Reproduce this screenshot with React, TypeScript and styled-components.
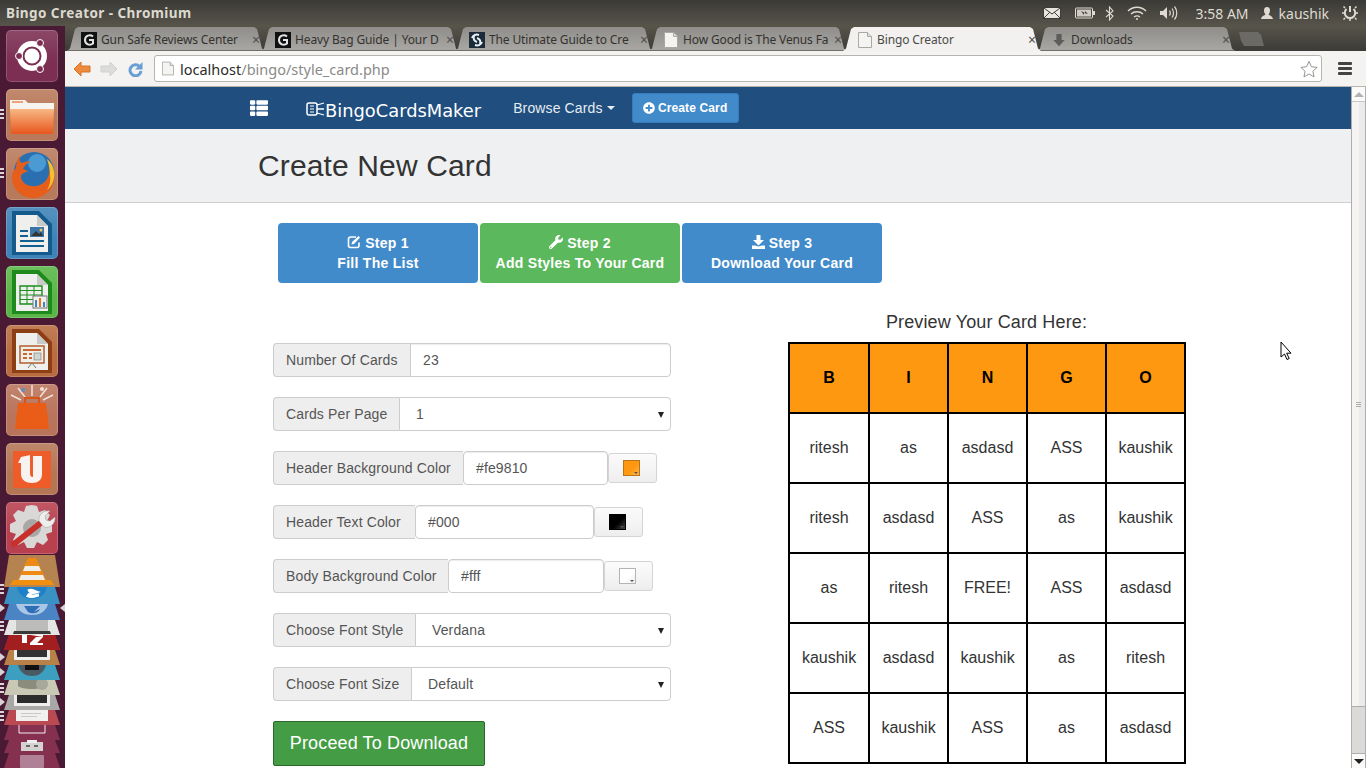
import { ReactElement, ReactNode } from "react";
import styled, { createGlobalStyle } from "styled-components";
import { FaPlusCircle, FaThList, FaWrench } from "react-icons/fa";

const GlobalStyle = createGlobalStyle`
    html, body {
        margin: 0;
        padding: 0;
        height: 768px;
        overflow: hidden;
        font-family: "Liberation Sans", Arial, sans-serif;
    }
    * { box-sizing: border-box; }
`;

const Desktop = styled.div`
    width: 1366px;
    height: 768px;
    display: flex;
    flex-direction: column;
    overflow: hidden;
`;

const TopArea = styled.div`
    background: linear-gradient(#3b3a36 0, #57544a 26px);
    height: 26px;
    display: flex;
    align-items: center;
    justify-content: space-between;
    padding: 0 8px 0 6px;
    color: #dfdbd2;
    font-family: "Noto Sans", "Open Sans", sans-serif;
`;

const WindowTitle = styled.div`
    font-size: 13.5px;
    font-weight: 700;
    letter-spacing: 0.43px;
    color: #dcd9d0;
`;

const Indicators = styled.div`
    display: flex;
    align-items: center;
    font-size: 14px;
    color: #dfdbd2;
`;

const Clock = styled.span`
    margin: 0 12px 0 17px;
`;

const UserName = styled.span`
    margin: 0 13px 0 6px;
`;

const IndicatorIcon = styled.svg<{ $gap?: number }>`
    display: block;
    margin-right: ${(p) => p.$gap ?? 0}px;
`;

const Body = styled.div`
    flex: 1;
    display: flex;
    min-height: 0;
`;

const Launcher = styled.div`
    width: 65px;
    background: #4a1a34;
    display: flex;
    flex-direction: column;
    align-items: center;
    padding-top: 4px;
    padding-right: 1px;
    position: relative;
`;

const Tile = styled.div<{ $color: string; $last?: boolean }>`
    width: 52px;
    height: 52px;
    border-radius: 5px;
    background: linear-gradient(rgba(255, 255, 255, 0.12), rgba(255, 255, 255, 0) 60%), ${(p) => p.$color};
    box-shadow: inset 0 0 0 1px rgba(255, 255, 255, 0.18);
    margin-bottom: ${(p) => (p.$last ? 1 : 7)}px;
    position: relative;
    flex: none;
    svg { display: block; }
`;

const StackSlice = styled.div<{ $color: string; $height: number }>`
    width: 56px;
    height: ${(p) => p.$height}px;
    background: ${(p) => p.$color};
    clip-path: polygon(5px 0, 51px 0, 56px 100%, 0 100%);
    flex: none;
    overflow: hidden;
    display: flex;
    justify-content: center;
    svg { display: block; }
`;

const Pips = styled.div<{ $top: number }>`
    position: absolute;
    left: 0;
    top: ${(p) => p.$top}px;
    display: flex;
    flex-direction: column;
    gap: 2px;
`;

const Pip = styled.i`
    display: block;
    width: 4px;
    height: 2px;
    background: #dcd6da;
`;

const Arrow = styled.i<{ $top: number; $right?: boolean }>`
    position: absolute;
    top: ${(p) => p.$top}px;
    ${(p) => (p.$right ? "right: 0;" : "left: 0;")}
    width: 0;
    height: 0;
    border-top: 4px solid transparent;
    border-bottom: 4px solid transparent;
    ${(p) => (p.$right ? "border-right: 5px solid #d8d2d6;" : "border-left: 5px solid #d8d2d6;")}
`;

const Browser = styled.div`
    flex: 1;
    display: flex;
    flex-direction: column;
    min-width: 0;
    background: #f2f1f0;
`;

const TabStrip = styled.div`
    height: 25px;
    background: linear-gradient(#57544a, #3c3b37);
    padding-left: 2px;
    display: flex;
    align-items: flex-end;
`;

const Tab = styled.div<{ $active?: boolean }>`
    width: 198px;
    height: 24px;
    margin-right: -4px;
    padding: 1px 4px 0 14px;
    display: flex;
    align-items: center;
    gap: 4px;
    font-family: "Noto Sans", "Open Sans", sans-serif;
    font-size: 12px;
    letter-spacing: -0.13px;
    color: ${(p) => (p.$active ? "#4a4a46" : "#34322e")};
    background: ${(p) => (p.$active ? "#f2f1f0" : "linear-gradient(#8f8d89, #a9a8a5)")};
    box-shadow: ${(p) => (p.$active ? "none" : "inset 0 -1px 0 #6f6e6a")};
    clip-path: polygon(0 100%, 3px 90%, 8px 8%, 11px 0, calc(100% - 11px) 0, calc(100% - 8px) 8%, calc(100% - 3px) 90%, 100% 100%);
    position: relative;
    z-index: ${(p) => (p.$active ? 2 : 1)};
`;

const TabIconBox = styled.span`
    width: 16px;
    height: 16px;
    flex: none;
    display: flex;
    align-items: center;
    justify-content: center;
    svg { display: block; }
`;

const TabLabel = styled.span`
    flex: 1;
    white-space: nowrap;
    overflow: hidden;
    min-width: 0;
`;

const TabClose = styled.span`
    font-size: 14px;
    width: 10px;
    text-align: center;
    color: #4f4e4a;
`;

const NewTab = styled.div`
    width: 25px;
    height: 14px;
    margin: 0 0 5px 8px;
    background: #6b6a65;
    clip-path: polygon(0 0, 19px 0, 22px 20%, 25px 100%, 5px 100%, 2px 60%);
`;

const ToolBar = styled.div`
    height: 36px;
    background: #f4f3f1;
    border-bottom: 1px solid #b5b3ae;
    display: flex;
    align-items: center;
    padding-left: 8px;
`;

const NavIcon = styled.svg<{ $gap: number }>`
    display: block;
    margin-right: ${(p) => p.$gap}px;
`;

const Omnibox = styled.div`
    width: 1168px;
    height: 27px;
    background: #fff;
    border: 1px solid #b6b4af;
    border-radius: 3px;
    display: flex;
    align-items: center;
    padding: 0 3px 0 7px;
    font-family: "Noto Sans", "Open Sans", sans-serif;
    font-size: 14.5px;
    svg { display: block; }
`;

const UrlHost = styled.span`
    color: #2c2c2c;
    margin-left: 6px;
`;

const UrlPath = styled.span`
    color: #8a8a88;
    flex: 1;
`;

const MenuBars = styled.div`
    margin-left: 16px;
    width: 14px;
    display: flex;
    flex-direction: column;
    gap: 2px;
    i {
        display: block;
        height: 3px;
        background: #45433f;
        border-radius: 1px;
    }
`;

const Viewport = styled.div`
    flex: 1;
    min-height: 0;
    display: flex;
`;

const Page = styled.div`
    flex: 1;
    min-width: 0;
    background: #fff;
    overflow: hidden;
    color: #333;
    font-size: 14px;
    letter-spacing: 0.13px;
`;

const ScrollBar = styled.div`
    width: 15px;
    display: flex;
    flex-direction: column;
    background: #dcdad8;
    border-left: 1px solid #b0aeac;
    border-right: 1px solid #b0aeac;
`;

const ScrollButton = styled.div<{ $down?: boolean }>`
    height: 15px;
    background: #fbfaf9;
    display: flex;
    align-items: center;
    justify-content: center;
    ${(p) => (p.$down ? "border-top: 1px solid #b0aeac;" : "border-bottom: 1px solid #c8c6c4;")}
    i {
        width: 0;
        height: 0;
        border-left: 5px solid transparent;
        border-right: 5px solid transparent;
        ${(p) => (p.$down ? "border-top: 5px solid #222;" : "border-bottom: 5px solid #b5b3b1;")}
    }
`;

const ScrollThumb = styled.div`
    height: 605px;
    background: linear-gradient(90deg, #f6f4f2 0 55%, #ecebe9 55% 100%);
    border-bottom: 1px solid #b0aeac;
    display: flex;
    flex-direction: column;
    align-items: center;
    justify-content: center;
    gap: 1px;
    i {
        display: block;
        width: 5px;
        height: 1px;
        background: #b0aeac;
    }
`;

const ScrollTrack = styled.div`
    flex: 1;
`;

const NavBar = styled.div`
    height: 42px;
    background: #1f4e7f;
    display: flex;
    align-items: center;
    padding-left: 185px;
    color: #fff;
`;

const Logo = styled.div`
    margin-left: 38px;
    display: flex;
    align-items: center;
    font-family: "DejaVu Sans", sans-serif;
    font-size: 17.85px;
    letter-spacing: 0;
    color: #fff;
    padding-top: 4px;
    svg { display: block; margin-top: -3px; }
`;

const BrowseLink = styled.div`
    margin-left: 32px;
    font-size: 14px;
    color: #e6ecf2;
    display: flex;
    align-items: center;
    gap: 4px;
    i {
        width: 0;
        height: 0;
        border-left: 4px solid transparent;
        border-right: 4px solid transparent;
        border-top: 4px solid #e6ecf2;
    }
`;

const CreateButton = styled.div`
    margin-left: 17px;
    width: 107px;
    height: 30px;
    background: #428bca;
    border: 1px solid #357ebd;
    border-radius: 3px;
    display: flex;
    align-items: center;
    justify-content: center;
    gap: 3px;
    font-size: 12px;
    font-weight: 700;
    color: #fff;
`;

const PageHeader = styled.div`
    height: 74px;
    background: #eff0f2;
    border-bottom: 1px solid #cfcfcf;
    display: flex;
    align-items: center;
    padding-left: 193px;
    h1 {
        margin: 0;
        font-size: 30px;
        font-weight: 400;
        color: #333;
    }
`;

const Steps = styled.div`
    margin: 20px 0 0 213px;
    display: flex;
    gap: 2px;
`;

const Step = styled.div<{ $active?: boolean }>`
    width: 200px;
    height: 60px;
    border-radius: 4px;
    background: ${(p) => (p.$active ? "#5cb85c" : "#428bca")};
    color: #fff;
    font-weight: 700;
    font-size: 14px;
    line-height: 20px;
    letter-spacing: 0.27px;
    text-align: center;
    padding-top: 10px;
    svg { vertical-align: -1px; }
`;

const Columns = styled.div`
    margin: 28px 0 0 208px;
    display: grid;
    grid-template-columns: 398px 398px;
    column-gap: 117px;
`;

const FormColumn = styled.div`
    padding-top: 32px;
    display: flex;
    flex-direction: column;
    gap: 20px;
`;

const FormRow = styled.div`
    display: flex;
    align-items: center;
`;

const AddOn = styled.label<{ $width: number }>`
    width: ${(p) => p.$width}px;
    height: 34px;
    display: flex;
    align-items: center;
    padding: 0 0 0 12px;
    flex: none;
    background: #eee;
    border: 1px solid #ccc;
    border-right: 0;
    border-radius: 4px 0 0 4px;
    color: #555;
    font-size: 14px;
    white-space: nowrap;
`;

const TextField = styled.input<{ $width?: number }>`
    height: 34px;
    ${(p) => (p.$width ? `width: ${p.$width}px;` : "flex: 1; min-width: 0;")}
    padding: 0 12px;
    border: 1px solid #ccc;
    border-radius: ${(p) => (p.$width ? "4px" : "0 4px 4px 0")};
    box-shadow: inset 0 1px 1px rgba(0, 0, 0, 0.075);
    color: #555;
    font: 14px "Liberation Sans", Arial, sans-serif;
    letter-spacing: 0.13px;
    outline: none;
`;

const SelectWrap = styled.div`
    flex: 1;
    min-width: 0;
    position: relative;
    &::after {
        content: "";
        position: absolute;
        right: 7px;
        top: 15px;
        border-left: 3.5px solid transparent;
        border-right: 3.5px solid transparent;
        border-top: 6px solid #222;
    }
`;

const SelectField = styled.select`
    display: block;
    width: 100%;
    height: 34px;
    padding: 0 16px;
    appearance: none;
    background: #fff;
    border: 1px solid #ccc;
    border-radius: 0 4px 4px 0;
    color: #555;
    font: 14px "Liberation Sans", Arial, sans-serif;
    letter-spacing: 0.13px;
    outline: none;
`;

const Swatch = styled.div`
    width: 49px;
    height: 30px;
    flex: none;
    background: linear-gradient(#fbfbfb, #eeeeee);
    border: 1px solid #d4d4d4;
    border-radius: 3px;
    display: flex;
    align-items: center;
    justify-content: center;
`;

const SwatchColor = styled.div<{ $color: string; $edge: string; $light: string }>`
    width: 17px;
    height: 16px;
    margin-right: 2px;
    background: linear-gradient(135deg, ${(p) => p.$color} 55%, ${(p) => p.$light});
    border: 1px solid ${(p) => p.$edge};
    position: relative;
    &::after {
        content: "";
        position: absolute;
        right: 1px;
        bottom: 1px;
        border-left: 2px solid transparent;
        border-right: 2px solid transparent;
        border-top: 2px solid #555;
    }
`;

const ProceedButton = styled.button`
    width: 212px;
    height: 45px;
    background: #449d44;
    border: 1px solid #2b662b;
    border-radius: 2px;
    color: #fff;
    font: 18px "Liberation Sans", Arial, sans-serif;
    letter-spacing: 0.13px;
`;

const PreviewTitle = styled.div`
    font-size: 18px;
    line-height: 20px;
    text-align: center;
    color: #333;
    padding: 1px 1px 0 0;
    margin-bottom: 10px;
`;

const CardTable = styled.table`
    width: 398px;
    border-collapse: collapse;
    table-layout: fixed;
    font-size: 16px;
    letter-spacing: 0;
    th, td {
        height: 70px;
        padding: 0;
        border: 2px solid #000;
        text-align: center;
    }
    th:first-child {
        width: 80px;
    }
    th {
        background: #fe9810;
        color: #000;
        font-weight: 700;
    }
    td {
        color: #333;
    }
`;

const CursorMark = styled.svg`
    position: absolute;
    left: 1280px;
    top: 341px;
`;

const Folder = (): ReactElement => (
    <svg width="52" height="52" viewBox="0 0 52 52">
        <path d="M4 11h15l3 3h26v8H4z" fill="#f7f3ee" />
        <path d="M6 12h11v2H6z" fill="#eda277" />
        <defs>
            <linearGradient id="fold" x1="0" y1="0" x2="0" y2="1">
                <stop offset="0" stopColor="#f7b884" />
                <stop offset="1" stopColor="#e9561f" />
            </linearGradient>
        </defs>
        <path d="M4 20h44l-1 25H5z" fill="url(#fold)" />
    </svg>
);

const Firefox = (): ReactElement => (
    <svg width="52" height="52" viewBox="0 0 52 52">
        <circle cx="28" cy="24" r="20" fill="#2a6fb0" />
        <circle cx="31" cy="15" r="9" fill="#4a9ad4" />
        <path d="M14 7c-3 5-4 9-4 13-3 3-4 6-4 9 0 12 9 21 21 21 13 0 21-10 21-20 0-7-2-14-7-19 2 5 3 10 2 15-2 9-10 13-18 12-6-1-10-5-10-9 0-3 3-5 7-5-1-2-3-2-5-3 1-3 4-6 8-7-4-1-7 0-9 1-2 0-3-4-2-8z" fill="#e65e1c" />
        <path d="M41 11c6 5 8 12 7 19-1 5-3 9-7 12 3-5 4-10 3-15 0-5-1-11-3-16z" fill="#f6c22a" />
    </svg>
);

const OfficeDoc = ({ dark, children }: { dark: string; children: ReactNode }): ReactElement => (
    <svg width="52" height="52" viewBox="0 0 52 52">
        <path d="M6 4h27l13 13v31H6z" fill={dark} />
        <path d="M10 8h21l11 11v26H10z" fill="#efefee" />
        <path d="M31 8l11 11H31z" fill="#c9c9c7" />
        {children}
    </svg>
);

const Writer = (): ReactElement => (
    <OfficeDoc dark="#145a8c">
        <path d="M14 23h8v2h-8zM14 28h8v2h-8zM14 33h24v2H14zM14 38h24v2H14z" fill="#16608f" />
        <rect x="24" y="20" width="14" height="10" fill="#3b74a6" />
        <path d="M25 29l5-5 3 3 2-2 2 4z" fill="#333" />
        <circle cx="35" cy="23" r="1.5" fill="#e8c75a" />
    </OfficeDoc>
);

const Calc = (): ReactElement => (
    <OfficeDoc dark="#1e8a1b">
        <path d="M14 20h22v18H14z" fill="none" stroke="#1c8f1c" strokeWidth="1.4" />
        <path d="M14 24.500h22M14 29h22M14 33.500h22M21 20v18M28 20v18" stroke="#1c8f1c" strokeWidth="1" />
        <rect x="27" y="30" width="14" height="12" fill="#efefee" stroke="#777" />
        <path d="M29 34h2v7h-2z" fill="#3a86c8" />
        <path d="M33 32h2v9h-2z" fill="#e8741c" />
        <path d="M37 36h2v5h-2z" fill="#3a86c8" />
    </OfficeDoc>
);

const Impress = (): ReactElement => (
    <OfficeDoc dark="#8c3f14">
        <rect x="14" y="21" width="24" height="17" fill="#efefee" stroke="#b2551f" strokeWidth="1.4" />
        <path d="M17 24h18v2H17z" fill="#c9682a" />
        <path d="M17 28h4v2h-4zM17 32h4v2h-4zM23 28h3v2h-3zM23 32h3v2h-3z" fill="#c9682a" />
        <rect x="28" y="28" width="7" height="7" fill="#cfd6cc" stroke="#777" strokeWidth="0.6" />
        <path d="M26 38l-4 5M26 38l4 5" stroke="#777" strokeWidth="1" />
    </OfficeDoc>
);

const Bag = (): ReactElement => (
    <svg width="52" height="52" viewBox="0 0 52 52">
        <path d="M12 4l7 9M26 1v11M41 4l-7 9M5 11l10 5M47 11l-10 5" stroke="#f3e2d3" strokeWidth="1.500" />
        <circle cx="17" cy="6" r="2" fill="#5b8fc4" />
        <circle cx="36" cy="5" r="2" fill="#f3e2d3" />
        <path d="M19 20v-6h14v6" fill="none" stroke="#d95516" strokeWidth="2" />
        <path d="M12 19h28l3 26H9z" fill="#ea5d18" />
    </svg>
);

const UbuntuOne = (): ReactElement => (
    <svg width="52" height="52" viewBox="0 0 52 52">
        <rect x="7" y="8" width="38" height="37" rx="1" fill="#ee5c2a" />
        <path d="M15 14l9-2v18c0 3 1 4 3 4V13h9v18c0 6-4 9-10 9s-11-3-11-9V20h-3z" fill="#f8f3f0" />
    </svg>
);

const Wrench = (): ReactElement => (
    <svg width="52" height="52" viewBox="0 0 52 52">
        <path d="M26 3l5 1 2 6 6-2 5 5-3 6 5 3v8l-6 2 2 6-5 5-6-3-3 6h-7l-3-6-6 3-5-5 3-6-6-2v-8l6-3-3-6 5-5 6 2 2-6z" fill="#d9d8d6" />
        <circle cx="26" cy="26" r="9" fill="#a8a7a5" />
        <path d="M8 42l28-22" stroke="#c8302c" strokeWidth="6" strokeLinecap="round" />
        <path d="M33 19c-1-6 4-11 11-10l-5 5 1 4 4 1 5-4c1 6-5 12-11 10z" fill="#eeeeec" stroke="#999" strokeWidth="0.5" />
    </svg>
);

const Circle = (): ReactElement => (
    <svg width="52" height="52" viewBox="0 0 52 52">
        <circle cx="26" cy="26" r="15" fill="#fff" />
        <circle cx="26" cy="26" r="8.500" fill="none" stroke="#7c2f53" strokeWidth="2" />
        <circle cx="34" cy="13" r="3.500" fill="#7c2f53" stroke="#fff" strokeWidth="1" />
        <circle cx="13" cy="26" r="3.500" fill="#7c2f53" stroke="#fff" strokeWidth="1" />
        <circle cx="34" cy="39" r="3.500" fill="#7c2f53" stroke="#fff" strokeWidth="1" />
    </svg>
);

const Cone = (): ReactElement => (
    <svg width="46" height="32" viewBox="0 0 46 32">
        <path d="M19 3h8l11 24H8z" fill="#ee8a14" />
        <path d="M16 11h14l2 5H14zM12 20h22l2 5H10z" fill="#eeeeea" />
        <path d="M4 25h38l3 5H1z" fill="#f0900e" />
    </svg>
);

const slices = [
    { color: "#3a92c4", height: 17, art: <svg width="56" height="17"><path d="M13 0h30c-2 9-9 12-15 12S15 9 13 0z" fill="#1d80c8" /><path d="M24 4c4-2 5 0 8 1-3 1-6 0-8 4 4 2 8-1 11-1" stroke="#fff" strokeWidth="3" fill="none" /></svg> },
    { color: "#4a84c4", height: 16, art: <svg width="56" height="16"><path d="M12 0h32c-2 8-9 11-16 11S14 8 12 0z" fill="#a9c6e6" /><path d="M20 2h16l-6 6 6-3c-2 5-8 5-12 3z" fill="#2d6eb5" /></svg> },
    { color: "#e5e5e3", height: 15, art: <svg width="56" height="15"><rect x="12" y="0" width="32" height="11" fill="#bcbcba" /><path d="M10 11h36l1 3H9z" fill="#3a3a3a" /></svg> },
    { color: "#c23a3a", height: 15, art: <svg width="56" height="15"><rect x="0" y="0" width="56" height="15" fill="#a31f1f" /><path d="M18 0h5v8h-5zM27 0h12v2l-6 6h6v2H26v-2l6-6 7 0" fill="#fff" /></svg> },
    { color: "#b78148", height: 15, art: <svg width="56" height="15"><rect x="10" y="0" width="36" height="10" rx="1" fill="#eeeeec" /><rect x="13" y="0" width="30" height="7" fill="#333" /></svg> },
    { color: "#3d9fc0", height: 15, art: <svg width="56" height="15"><path d="M14 0h28c-2 8-8 11-14 11S16 8 14 0z" fill="#4b5a60" /><rect x="21" y="0" width="14" height="5" fill="#111" /></svg> },
    { color: "#c9c8b5", height: 15, art: <svg width="56" height="15"><path d="M14 0h28v6c-4 4-24 4-28 0z" fill="#8c8c7c" /><circle cx="38" cy="4" r="6" fill="#a7a79a" /></svg> },
    { color: "#a9a8a6", height: 15, art: <svg width="56" height="15"><rect x="10" y="0" width="36" height="11" fill="#eeeeec" /><rect x="13" y="0" width="30" height="8" fill="#2b2b2b" /></svg> },
    { color: "#b94a52", height: 15, art: <svg width="56" height="15"><rect x="12" y="0" width="32" height="11" fill="#f2f0ee" /><path d="M17 3h20v1H17zM17 6h16v1H17z" fill="#c8c8c8" /></svg> },
    { color: "#85304f", height: 15, art: <svg width="56" height="15"><path d="M15 0v8h26V0" stroke="#f2eef0" strokeWidth="1" fill="none" /></svg> },
    { color: "#85304f", height: 13, art: <svg width="56" height="13"><rect x="17" y="2" width="22" height="9" fill="#d6d2d2" /><rect x="23" y="0" width="10" height="3" fill="#efeeee" /><path d="M22 5h4v2h-4zM30 5h4v2h-4z" fill="#666" /></svg> },
    { color: "#85304f", height: 15, art: <svg width="56" height="15"><rect x="16" y="2" width="24" height="13" rx="1" fill="#b08096" /></svg> },
];

const rows = [
    ["ritesh", "as", "asdasd", "ASS", "kaushik"],
    ["ritesh", "asdasd", "ASS", "as", "kaushik"],
    ["as", "ritesh", "FREE!", "ASS", "asdasd"],
    ["kaushik", "asdasd", "kaushik", "as", "ritesh"],
    ["ASS", "kaushik", "ASS", "as", "asdasd"],
];

const tabs = [
    { title: "Gun Safe Reviews Center", icon: "g" },
    { title: "Heavy Bag Guide | Your D", icon: "g" },
    { title: "The Utimate Guide to Cre", icon: "s" },
    { title: "How Good is The Venus Fa", icon: "d" },
    { title: "Bingo Creator", icon: "d", active: true },
    { title: "Downloads", icon: "a" },
];

const DocIcon = ({ width, height }: { width: number; height: number }): ReactElement => (
    <svg width={width} height={height} viewBox="0 0 14 16">
        <path d="M.5.500h9l4 4v11H.500z" fill="#f4f4f2" stroke="#a9a8a4" />
        <path d="M9.500.500v4h4" fill="#dededc" stroke="#a9a8a4" />
    </svg>
);

const TabIcon = ({ kind }: { kind: string }): ReactElement => {
    if (kind === "g") {
        return (
            <svg width="16" height="16" viewBox="0 0 16 16">
                <rect width="16" height="16" fill="#111" />
                <path d="M12 4.500C9 2 4 3.500 4 8s5 6 8 3.500V8H8" fill="none" stroke="#e4e4e4" strokeWidth="2" />
            </svg>
        );
    }
    if (kind === "s") {
        return (
            <svg width="16" height="16" viewBox="0 0 16 16">
                <rect width="16" height="16" fill="#1c2b3a" />
                <path d="M3 6c1-3 4-4 7-3M5 4c-1 3 0 5 3 6M13 10c-1 3-4 4-7 3M11 12c1-3 0-5-3-6" fill="none" stroke="#e8eef2" strokeWidth="2" />
            </svg>
        );
    }
    if (kind === "a") {
        return (
            <svg width="14" height="14" viewBox="0 0 16 16">
                <path d="M5 1h6v7h3.500L8 15 1.500 8H5z" fill="#5d5c58" />
            </svg>
        );
    }
    return <DocIcon width={14} height={16} />;
};

const App = (): ReactElement => (
    <>
        <GlobalStyle />
        <Desktop>
            <TopArea>
                <WindowTitle>Bingo Creator - Chromium</WindowTitle>
                <Indicators>
                    <IndicatorIcon width="18" height="12" viewBox="0 0 18 12" $gap={14}>
                        <rect x=".5" y=".5" width="17" height="11" fill="#e8e5dd" stroke="#3c3b37" />
                        <path d="M1 1l8 6 8-6M1 11l6-6M17 11l-6-6" fill="none" stroke="#3c3b37" />
                    </IndicatorIcon>
                    <IndicatorIcon width="20" height="12" viewBox="0 0 20 12" $gap={10}>
                        <rect x=".5" y="1" width="17" height="10" rx="1" fill="none" stroke="#dfdbd2" />
                        <rect x="2" y="2.500" width="14" height="7" fill="#cfcbc2" />
                        <path d="M6 4l4 2 0-2 3 3-4-1 0 2z" fill="#3c3b37" />
                        <rect x="18" y="4" width="2" height="4" fill="#dfdbd2" />
                    </IndicatorIcon>
                    <IndicatorIcon width="9" height="15" viewBox="0 0 9 15" $gap={13}>
                        <path d="M1 4l7 6-3.500 4V1L8 5 1 11" fill="none" stroke="#dfdbd2" strokeWidth="1.100" />
                    </IndicatorIcon>
                    <IndicatorIcon width="20" height="14" viewBox="0 0 20 14" $gap={12}>
                        <path d="M1 5c5-5 13-5 18 0M4 8c3-3 9-3 12 0M7 11c2-1.500 4-1.500 6 0" fill="none" stroke="#dfdbd2" strokeWidth="1.400" />
                        <circle cx="10" cy="13" r="1" fill="#dfdbd2" />
                    </IndicatorIcon>
                    <IndicatorIcon width="20" height="16" viewBox="0 0 20 16" $gap={0}>
                        <path d="M1 6h3l4-4v12l-4-4H1z" fill="#dfdbd2" />
                        <path d="M10.500 5.500c1 1.500 1 3.500 0 5M13 3.500c2 2.500 2 6.500 0 9M15.500 1.500c3 3.500 3 9.500 0 13" fill="none" stroke="#dfdbd2" strokeWidth="1.200" />
                    </IndicatorIcon>
                    <Clock>3:58 AM</Clock>
                    <IndicatorIcon width="12" height="14" viewBox="0 0 12 14">
                        <path d="M6 1c2 0 3 1.500 3 3.500S8 8 7.500 8.500c1 1 4 1.500 4.500 4.500H0c.5-3 3.500-3.500 4.500-4.500C4 8 3 6.500 3 4.500S4 1 6 1z" fill="#dfdbd2" />
                    </IndicatorIcon>
                    <UserName>kaushik</UserName>
                    <IndicatorIcon width="16" height="16" viewBox="0 0 16 16">
                        <path d="M8 1v6M4.500 4a5.200 5.200 0 1 0 7 0" fill="none" stroke="#dfdbd2" strokeWidth="2" />
                        <path d="M8 13v3M2 8H0M16 8h-2M3 3L1.500 1.500M13 3l1.500-1.500M3 13l-1.500 1.500M13 13l1.500 1.500" stroke="#dfdbd2" strokeWidth="1.500" />
                    </IndicatorIcon>
                </Indicators>
            </TopArea>
            <Body>
                <Launcher>
                    <Tile $color="#7c2f53"><Circle /></Tile>
                    <Tile $color="#b9795a"><Folder /></Tile>
                    <Tile $color="#b87a5c"><Firefox /></Tile>
                    <Tile $color="#3f83b6"><Writer /></Tile>
                    <Tile $color="#5ab648"><Calc /></Tile>
                    <Tile $color="#b86c40"><Impress /></Tile>
                    <Tile $color="#b9745c"><Bag /></Tile>
                    <Tile $color="#b57656"><UbuntuOne /></Tile>
                    <Tile $color="#b8404f" $last><Wrench /></Tile>
                    <StackSlice $color="#b58350" $height={32}><Cone /></StackSlice>
                    {slices.map((s, i) => <StackSlice key={i} $color={s.color} $height={s.height}>{s.art}</StackSlice>)}
                    <Pips $top={83}><Pip /><Pip /><Pip /></Pips>
                    <Pips $top={142}><Pip /><Pip /><Pip /></Pips>
                    <Pips $top={558}><Pip /><Pip /><Pip /></Pips>
                    <Arrow $top={578} />
                    <Arrow $top={578} $right />
                    <Pips $top={595}><Pip /><Pip /><Pip /></Pips>
                    <Arrow $top={627} />
                    <Arrow $top={642} />
                    <Pips $top={657}><Pip /><Pip /><Pip /></Pips>
                    <Arrow $top={672} />
                    <Pips $top={685}><Pip /><Pip /><Pip /></Pips>
                </Launcher>
                <Browser>
                    <TabStrip>
                        {tabs.map((t) => (
                            <Tab key={t.title} $active={t.active}>
                                <TabIconBox><TabIcon kind={t.icon} /></TabIconBox>
                                <TabLabel>{t.title}</TabLabel>
                                <TabClose>×</TabClose>
                            </Tab>
                        ))}
                        <NewTab />
                    </TabStrip>
                    <ToolBar>
                        <NavIcon width="18" height="16" viewBox="0 0 18 16" $gap={9}>
                            <path d="M8 1L1 8l7 7v-4h9V5H8z" fill="#ee8a3c" stroke="#d4752a" />
                        </NavIcon>
                        <NavIcon width="18" height="16" viewBox="0 0 18 16" $gap={10}>
                            <path d="M10 1l7 7-7 7v-4H1V5h9z" fill="#dcdcda" stroke="#cfcfcd" />
                        </NavIcon>
                        <NavIcon width="15" height="16" viewBox="0 0 15 16" $gap={11}>
                            <path d="M11.500 5.500A5.500 5.500 0 1 0 13 10" fill="none" stroke="#6a9fd4" strokeWidth="3" />
                            <path d="M14.500 1v7.500H7z" fill="#6a9fd4" />
                        </NavIcon>
                        <Omnibox>
                            <DocIcon width={12} height={15} />
                            <UrlHost>localhost</UrlHost>
                            <UrlPath>/bingo/style_card.php</UrlPath>
                            <svg width="18" height="18" viewBox="0 0 20 19">
                                <path d="M10 1l2.700 6 6.300.7-4.700 4.300 1.300 6.300L10 15l-5.600 3.300L5.700 12 1 7.700 7.300 7z" fill="#fff" stroke="#8a8986" />
                            </svg>
                        </Omnibox>
                        <MenuBars><i /><i /><i /></MenuBars>
                    </ToolBar>
                    <Viewport>
                        <Page>
                            <NavBar>
                                <FaThList size={18} />
                                <Logo>
                                    <svg width="19" height="18" viewBox="0 0 19 18">
                                        <rect x="1" y="3" width="10" height="12" rx="2" fill="none" stroke="#fff" strokeWidth="1.500" />
                                        <path d="M4 6h4M4 9h4M4 12h4" stroke="#fff" strokeWidth="1.200" />
                                        <path d="M11 5l7-2M11 9h7M11 13l7 2" stroke="#fff" strokeWidth="1.300" />
                                    </svg>
                                    BingoCardsMaker
                                </Logo>
                                <BrowseLink>Browse Cards <i /></BrowseLink>
                                <CreateButton><FaPlusCircle size={12} /> Create Card</CreateButton>
                            </NavBar>
                            <PageHeader><h1>Create New Card</h1></PageHeader>
                            <Steps>
                                <Step>
                                    <svg width="14" height="14" viewBox="0 0 14 14">
                                        <path d="M9 2H3.500A2 2 0 0 0 1.500 4v6.500a2 2 0 0 0 2 2H10a2 2 0 0 0 2-2V7.500" fill="none" stroke="#fff" strokeWidth="1.600" />
                                        <path d="M5 7l-.5 2.500L7 9l6-6.500L11.500 1z" fill="#fff" />
                                    </svg> Step 1<br />Fill The List
                                </Step>
                                <Step $active><FaWrench size={14} /> Step 2<br />Add Styles To Your Card</Step>
                                <Step>
                                    <svg width="13" height="14" viewBox="0 0 13 14"><path d="M4.500 0h4v5H12L6.500 10.500 1 5h3.500zM0 10.500h3l3.500 1 3.500-1h3V14H0z" fill="#fff" /></svg> Step 3<br />Download Your Card
                                </Step>
                            </Steps>
                            <Columns>
                                <FormColumn>
                                    <FormRow>
                                        <AddOn $width={137}>Number Of Cards</AddOn>
                                        <TextField defaultValue="23" />
                                    </FormRow>
                                    <FormRow>
                                        <AddOn $width={126}>Cards Per Page</AddOn>
                                        <SelectWrap>
                                            <SelectField defaultValue="1"><option>1</option></SelectField>
                                        </SelectWrap>
                                    </FormRow>
                                    <FormRow>
                                        <AddOn $width={190}>Header Background Color</AddOn>
                                        <TextField $width={145} defaultValue="#fe9810" />
                                        <Swatch><SwatchColor $color="#fe9810" $light="#ffb347" $edge="#b8741a" /></Swatch>
                                    </FormRow>
                                    <FormRow>
                                        <AddOn $width={142}>Header Text Color</AddOn>
                                        <TextField $width={179} defaultValue="#000" />
                                        <Swatch><SwatchColor $color="#000" $light="#444" $edge="#000" /></Swatch>
                                    </FormRow>
                                    <FormRow>
                                        <AddOn $width={175}>Body Background Color</AddOn>
                                        <TextField $width={156} defaultValue="#fff" />
                                        <Swatch><SwatchColor $color="#fff" $light="#eee" $edge="#b4b4b4" /></Swatch>
                                    </FormRow>
                                    <FormRow>
                                        <AddOn $width={142}>Choose Font Style</AddOn>
                                        <SelectWrap>
                                            <SelectField defaultValue="Verdana"><option>Verdana</option></SelectField>
                                        </SelectWrap>
                                    </FormRow>
                                    <FormRow>
                                        <AddOn $width={138}>Choose Font Size</AddOn>
                                        <SelectWrap>
                                            <SelectField defaultValue="Default"><option>Default</option></SelectField>
                                        </SelectWrap>
                                    </FormRow>
                                    <ProceedButton>Proceed To Download</ProceedButton>
                                </FormColumn>
                                <div>
                                    <PreviewTitle>Preview Your Card Here:</PreviewTitle>
                                    <CardTable>
                                        <thead>
                                            <tr>{["B", "I", "N", "G", "O"].map((h) => <th key={h}>{h}</th>)}</tr>
                                        </thead>
                                        <tbody>
                                            {rows.map((r, i) => (
                                                <tr key={i}>{r.map((c, j) => <td key={j}>{c}</td>)}</tr>
                                            ))}
                                        </tbody>
                                    </CardTable>
                                </div>
                            </Columns>
                        </Page>
                        <ScrollBar>
                            <ScrollButton><i /></ScrollButton>
                            <ScrollThumb><i /><i /><i /></ScrollThumb>
                            <ScrollTrack />
                            <ScrollButton $down><i /></ScrollButton>
                        </ScrollBar>
                    </Viewport>
                </Browser>
            </Body>
            <CursorMark width="12" height="20" viewBox="0 0 12 20">
                <path d="M1 1v15l3.500-3 2.500 5.500 2.200-1-2.500-5.300H11z" fill="#fff" stroke="#000" />
            </CursorMark>
        </Desktop>
    </>
);

export default App;
